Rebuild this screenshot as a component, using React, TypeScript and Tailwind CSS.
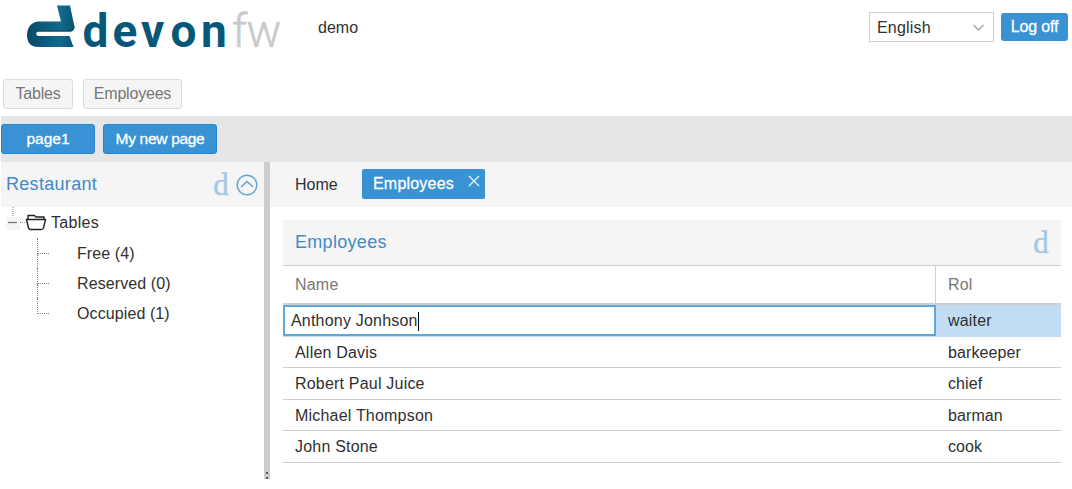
import React from "react";

const rows = [
  { name: "Allen Davis", role: "barkeeper", h: "h-[31px]" },
  { name: "Robert Paul Juice", role: "chief", h: "h-[32px]" },
  { name: "Michael Thompson", role: "barman", h: "h-[31px]" },
  { name: "John Stone", role: "cook", h: "h-[32px]" },
];

function Logo() {
  return (
    <svg width="260" height="70" viewBox="25 0 260 70" className="block shrink-0" role="img" aria-label="devonfw">
      <defs>
        <linearGradient id="mark" x1="0" y1="0" x2="1" y2="0">
          <stop offset="0" stopColor="#064a68" />
          <stop offset="0.7" stopColor="#126b8c" />
          <stop offset="1" stopColor="#075475" />
        </linearGradient>
      </defs>
      <path d="M57 5.500H70L74.300 26C74.800 29 73.500 31.500 70 31.500H38.500C35.500 31.500 35.500 36 38.500 36H69.500L73.500 47H38C30 47 27 41.500 27 35C27 28 31 21.500 39 21.500H61Z" fill="url(#mark)" />
      <path d="M37 31H70C73 31 74 29 74 26" fill="none" stroke="#064862" strokeWidth="1" />
      <text x="82.500 112.500 141 170.500 201" y="47" fontFamily="Roboto, sans-serif" fontWeight="700" fontSize="46" fill="#07577a">devon</text>
      <text x="232 246.500" y="47" fontFamily="Roboto, sans-serif" fontWeight="300" fontSize="46" fill="#c9cacb" stroke="#c9cacb" strokeWidth="0.500">fw</text>
    </svg>
  );
}

function Mark() {
  return (
    <span className="font-['Liberation_Serif',serif] text-[31px] leading-none text-[#9fc9e9] [-webkit-text-stroke:0.4px_#9fc9e9]">
      d
    </span>
  );
}

function TreeItem({ label, last }: { label: string; last?: boolean }) {
  return (
    <li className="flex h-[30px] text-[#303030]">
      <span className="flex w-[13px] shrink-0 flex-col">
        <span className="h-[16px] w-[12px] border-b border-l border-dotted border-[#858585]" />
        <span className={last ? "h-[14px]" : "h-[14px] border-l border-dotted border-[#858585]"} />
      </span>
      <span className="pl-[27px] leading-[31px] tracking-[0.1px]">{label}</span>
    </li>
  );
}

export default function App() {
  return (
    <div className="flex h-[489px] w-[1072px] flex-col overflow-hidden bg-white font-['Liberation_Sans',Arial,sans-serif] text-[16px] tracking-[0.2px] text-[#303030]">
      <header className="flex h-[79px] shrink-0 items-start pl-[25px] pr-[4px]">
        <Logo />
        <span className="ml-[33px] mt-[16px] leading-6 tracking-[0px]">demo</span>
        <div className="ml-auto flex items-center gap-[7px] pt-[12px]">
          <button className="flex h-[30px] w-[125px] items-center justify-between border border-[#cfcfcf] pl-[7px] pr-[8px] pt-px">
            English
            <svg width="13" height="8" viewBox="0 0 13 8" fill="none" stroke="#a5a5a5" strokeWidth="1.3"><path d="M1.500 1L6.500 6L11.500 1" /></svg>
          </button>
          <button className="h-[28px] w-[67px] rounded-[3px] bg-[#3892d4] tracking-[-0.15px] text-white [-webkit-text-stroke:0.3px_white]">Log off</button>
        </div>
      </header>

      <nav className="flex h-[37px] shrink-0 gap-[10px] pl-[3px] tracking-[-0.2px] text-[#777]">
        <button className="h-[30px] w-[70px] rounded-[3px] border border-[#dadada] bg-[#f5f5f5]">Tables</button>
        <button className="h-[30px] w-[99px] rounded-[3px] border border-[#dadada] bg-[#f5f5f5]">Employees</button>
      </nav>

      <div className="ml-px flex h-[46px] shrink-0 gap-[8px] bg-[#e6e6e6] pt-[8px] text-[15.500px] tracking-[-0.3px] text-white [-webkit-text-stroke:0.3px_white]">
        <button className="h-[30px] w-[94px] rounded-[3px] border border-[#2585cd] bg-[#3892d4] tracking-[0px]">page1</button>
        <button className="h-[30px] w-[114px] rounded-[3px] border border-[#2585cd] bg-[#3892d4]">My new page</button>
      </div>

      <div className="ml-px flex h-[317px] shrink-0">
        <aside className="w-[263px] shrink-0">
          <div className="flex h-[45px] items-center bg-[#f5f5f5] pl-[5px] pr-[6px]">
            <h2 className="text-[18px] tracking-[0.3px] text-[#4289c9]">Restaurant</h2>
            <span className="ml-auto mr-[7px] flex"><Mark /></span>
            <svg width="22" height="22" viewBox="0 0 22 22" fill="none" stroke="#66a4d1" strokeWidth="1.5"><circle cx="11" cy="11" r="9.800" /><path d="M5 13L11 7.500L17 13" /></svg>
          </div>
          <div className="flex h-[31px] items-start">
            <svg width="48" height="31" viewBox="0 0 48 31" fill="none" className="shrink-0">
              <path d="M5 10H19V23H5Z" fill="#f5f5f5" />
              <path d="M12 0V9M19 15.500H25" stroke="#858585" strokeDasharray="1 1" />
              <path d="M7 15.500H16" stroke="#777" strokeWidth="1.3" />
              <path d="M27.500 21L25.500 12.500H44.500L42.500 21Q42.300 22.500 40 22.500H30Q28 22.500 27.500 21ZM27 12V8.500H33.500L35 10H43V12" stroke="#222" strokeWidth="1.400" strokeLinejoin="round" />
            </svg>
            <span className="pl-[2px] leading-[32px] tracking-[0.3px]">Tables</span>
          </div>
          <ul className="pl-[36px]">
            <TreeItem label="Free (4)" />
            <TreeItem label="Reserved (0)" />
            <TreeItem label="Occupied (1)" last />
          </ul>
        </aside>

        <div className="flex w-[6px] shrink-0 flex-col items-center justify-end bg-[#cdcdcd]">
          <span className="h-[7px] border-l-2 border-dotted border-[#555]" />
        </div>

        <main className="min-w-0 flex-1">
          <div className="flex h-[45px] items-start bg-[#f5f5f5] pl-[25px] pt-[7px]">
            <span className="w-[67px] leading-[31px] tracking-[0px]">Home</span>
            <div className="flex h-[30px] w-[123px] rounded-[2px] bg-[#3892d4] pl-[11px] leading-[30px] text-white">
              <span className="[-webkit-text-stroke:0.3px_white]">Employees</span>
              <svg className="ml-auto mr-[5px] mt-[6px]" width="12" height="12" viewBox="0 0 12 12" stroke="#e4f1fb" strokeWidth="1.400"><path d="M1 1L11 11M11 1L1 11" /></svg>
            </div>
          </div>
          <section className="ml-[13px] mr-[11px] mt-[13px]">
            <div className="flex h-[46px] items-center justify-between border-b border-[#cdcdcd] bg-[#f5f5f5] pl-[12px] pr-[12px]">
              <h2 className="text-[18px] tracking-[0.3px] text-[#4289c9]">Employees</h2>
              <Mark />
            </div>
            <div className="flex h-[39px] border-b-2 border-[#cfcfcf] leading-[38px] text-[#777]">
              <div className="w-[653px] border-r border-[#cfcfcf] pl-[12px]">Name</div>
              <div className="pl-[12px]">Rol</div>
            </div>
            <div className="flex h-[32px] bg-[#c2ddf2] leading-[32px]">
              <div className="flex h-[31px] w-[653px] items-center border-2 border-[#5ba7de] bg-white pl-[6px] pt-px">
                Anthony Jonhson<span className="h-[19px] w-[1.500px] bg-black" />
              </div>
              <div className="pl-[12px]">waiter</div>
            </div>
            {rows.map((r) => (
              <div key={r.name} className={"flex items-center border-b border-[#cfcfcf] pt-px " + r.h}>
                <div className="w-[653px] pl-[12px]">{r.name}</div>
                <div className="pl-[12px] tracking-[0.1px]">{r.role}</div>
              </div>
            ))}
          </section>
        </main>
      </div>
    </div>
  );
}
